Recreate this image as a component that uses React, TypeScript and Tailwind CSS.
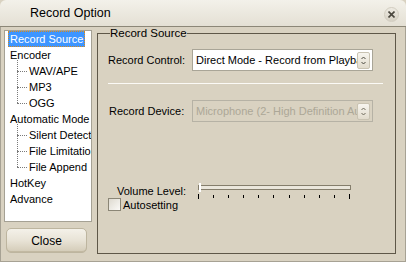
const font = { fontFamily: '"Liberation Sans", Arial, sans-serif' }

const Spinner = ({ disabled }: { disabled?: boolean }) => (
  <div className="ml-auto mr-[2px] flex h-[17px] w-[13px] shrink-0 items-center justify-center rounded-[2px] border border-[#c9c3b2] bg-gradient-to-b from-[#f7f5ef] to-[#e2dccd]">
    <svg width="5" height="9" viewBox="0 0 5 9">
      <path d="M0.5 3 L2.5 1 L4.5 3" fill="none" stroke={disabled ? '#6f6a5c' : '#4d4a40'} strokeWidth="1" />
      <path d="M0.5 6 L2.5 8 L4.5 6" fill="none" stroke={disabled ? '#6f6a5c' : '#4d4a40'} strokeWidth="1" />
    </svg>
  </div>
)

const TreeChild = ({ label }: { label: string }) => (
  <div className="flex h-[16px] items-center whitespace-nowrap">
    <div className="ml-[12px] w-[10px] shrink-0 border-t border-dotted border-[#7a7a7a]" />
    <span className="ml-[2px]">{label}</span>
  </div>
)

const App = () => {
  const ticks = [0, 1, 2, 3, 4, 5, 6, 7, 8, 9, 10]
  return (
    <div style={font} className="flex h-[262px] w-[406px] flex-col overflow-hidden bg-[#d9d2c1] text-[11px] text-black">
      <div className="flex h-[27px] shrink-0 items-center rounded-t-[6px] border-b border-[#8c8777] bg-gradient-to-b from-[#f3f1ea] to-[#e4e0d4] pl-[30px] pr-[7px]">
        <span className="text-[12.5px]">Record Option</span>
        <div className="ml-auto mt-[2px] flex h-[15px] w-[15px] items-center justify-center rounded-full border border-[#d2cdc0] bg-gradient-to-b from-[#eeebe3] to-[#d6d1c4]">
          <svg width="7" height="7" viewBox="0 0 7 7">
            <path d="M0.5 0.5 L6.5 6.5 M6.5 0.5 L0.5 6.5" stroke="#4a473e" strokeWidth="1.6" />
          </svg>
        </div>
      </div>

      <div className="flex flex-1 gap-[5px] border-x border-b border-[#a7a294] pl-[3px] pr-[9px]">
        <div className="flex w-[88px] shrink-0 flex-col pt-[3px]">
          <div className="h-[192px] overflow-hidden border border-[#a5a194] bg-white leading-[16px]">
            <div className="flex h-[16px] items-center pl-[3px]">
              <span className="border border-dotted border-[#d88a1c] bg-[#3d95ff] px-[1px] leading-[14px] text-white">Record Source</span>
            </div>
            <div className="h-[16px] pl-[5px]">Encoder</div>
            <div className="relative">
              <div className="absolute left-[12px] top-[-3px] h-[43px] border-l border-dotted border-[#7a7a7a]" />
              <TreeChild label="WAV/APE" />
              <TreeChild label="MP3" />
              <TreeChild label="OGG" />
            </div>
            <div className="h-[16px] whitespace-nowrap pl-[5px]">Automatic Mode</div>
            <div className="relative">
              <div className="absolute left-[12px] top-[-3px] h-[43px] border-l border-dotted border-[#7a7a7a]" />
              <TreeChild label="Silent Detect" />
              <TreeChild label="File Limitation" />
              <TreeChild label="File Append" />
            </div>
            <div className="h-[16px] pl-[5px]">HotKey</div>
            <div className="h-[16px] pl-[5px]">Advance</div>
          </div>
          <button className="ml-[2px] mt-[6px] h-[25px] w-[81px] rounded-[5px] border border-[#bdb59f] bg-gradient-to-b from-[#f4f1e9] via-[#e8e3d6] to-[#d3cbb7] text-[12px] shadow-[inset_0_-1px_0_#c2b9a2]">
            Close
          </button>
        </div>

        <fieldset className="mb-[7px] flex-1 border border-[#5e5748] px-[10px]">
          <legend className="ml-[2px] px-0 text-[11.5px] leading-[13px]">Record Source</legend>
          <div className="mt-[9px] flex h-[22px] items-center">
            <span className="w-[84px]">Record Control:</span>
            <div className="flex h-[22px] w-[181px] items-center overflow-hidden border border-[#a9a597] bg-white pl-[3px]">
              <span className="overflow-hidden whitespace-nowrap">Direct Mode - Record from Playba</span>
              <Spinner />
            </div>
          </div>
          <div className="mr-[2px] mt-[12px] h-px bg-[#fbfaf6]" />
          <div className="mt-[16px] flex h-[22px] items-center">
            <span className="w-[84px] pl-[1px]">Record Device:</span>
            <div className="flex h-[22px] w-[181px] items-center overflow-hidden border border-[#b6b2a5] pl-[3px]">
              <span className="overflow-hidden whitespace-nowrap text-[#aca797]">Microphone (2- High Definition Au</span>
              <Spinner disabled />
            </div>
          </div>

          <div className="mt-[63px] flex items-start">
            <span className="ml-[9px] mt-[-2px] w-[81px]">Volume Level:</span>
            <div className="flex w-[153px] flex-col">
              <div className="relative h-[5px] border border-[#857e6c] bg-[#ebe7dc]">
                <div className="absolute left-[0px] top-[-3px] h-[9px] w-[2px] bg-white" />
              </div>
              <div className="mt-[4px] flex justify-between pr-[1px]">
                {ticks.map(t => (
                  <div key={t} className={t === 0 || t === 10 ? 'h-[5px] w-px bg-black' : 'mt-[1px] h-[3px] w-px bg-black'} />
                ))}
              </div>
            </div>
          </div>
          <label className="mt-[-3px] flex items-center">
            <span className="h-[13px] w-[13px] border border-[#8b8676] bg-gradient-to-br from-[#dedad0] to-[#fbfaf7]" />
            <span className="ml-[2px]">Autosetting</span>
          </label>
        </fieldset>
      </div>
    </div>
  )
}

export default App
